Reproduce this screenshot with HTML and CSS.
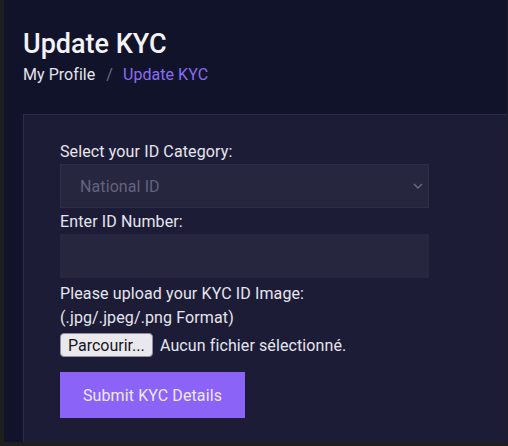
FILE: index.html
```html
<!DOCTYPE html>
<html lang="en">
<head>
<meta charset="utf-8">
<title>Update KYC</title>
<link rel="stylesheet" href="styles.css">
</head>
<body>
<div class="frame">
  <main class="page">
    <h1 class="title">Update KYC</h1>
    <nav class="crumbs">
      <span class="crumb">My Profile</span>
      <span class="sep">/</span>
      <span class="crumb current">Update KYC</span>
    </nav>
    <section class="card">
      <form class="form">
        <label class="label">Select your ID Category:</label>
        <div class="select-wrap">
          <div class="select">National ID</div>
          <svg class="chev" width="10" height="6" viewBox="0 0 10 6"><path d="M1 1l4 4 4-4" fill="none" stroke="#6a6985" stroke-width="1.4"/></svg>
        </div>
        <label class="label after-select">Enter ID Number:</label>
        <div class="input"></div>
        <p class="label after-input">Please upload your KYC ID Image:<br>(.jpg/.jpeg/.png Format)</p>
        <div class="file">
          <span class="file-btn">Parcourir...</span>
          <span class="file-name">Aucun fichier sélectionné.</span>
        </div>
        <button type="button" class="submit">Submit KYC Details</button>
      </form>
    </section>
  </main>
</div>
</body>
</html>
```

FILE: styles.css
```css
* { box-sizing: border-box; }
html, body { margin: 0; padding: 0; }
body {
  background: #1e1e1f;
  width: 508px;
  height: 446px;
  overflow: hidden;
  font-family: Roboto, "Liberation Sans", sans-serif;
}
.frame {
  display: flex;
  height: 446px;
  padding: 0 1px 4px 4px;
}
.page {
  flex: 1;
  display: flex;
  flex-direction: column;
  background: #11132a;
  padding: 27px 0 0 19px;
}
.title {
  margin: 0 0 2px 0;
  font-size: 27px;
  line-height: 34px;
  font-weight: 500;
  color: #f3f3f7;
}
.crumbs {
  display: flex;
  font-size: 16px;
  line-height: 24px;
  letter-spacing: 0.05px;
  color: #e4e4ec;
  margin-bottom: 27px;
}
.sep {
  color: #6c6c80;
  margin: 0 10px 0 11px;
}
.current { color: #8b6cf3; }
.card {
  flex: 1;
  background: #1d1c37;
  border-top: 1px solid #2c2b49;
  border-left: 1px solid #2c2b49;
  padding: 25px 0 0 36px;
}
.form {
  display: flex;
  flex-direction: column;
  align-items: flex-start;
}
.label {
  margin: 0;
  font-size: 16px;
  line-height: 24px;
  letter-spacing: 0.12px;
  color: #e6e6ee;
}
.after-select { margin-top: 2px; }
.after-input { margin-top: 4px; }
.select-wrap {
  position: relative;
  width: 369px;
}
.select, .input {
  width: 369px;
  height: 44px;
  background: #27263f;
  border: 1px solid #2e2d4a;
}
.select {
  display: flex;
  align-items: center;
  padding-left: 19px;
  font-size: 16px;
  letter-spacing: 0.1px;
  color: #64637e;
}
.chev {
  position: absolute;
  right: 6px;
  top: 19px;
}
.input { border-color: #27263f; }
.file {
  display: flex;
  align-items: center;
  gap: 7px;
  margin-top: 3px;
  font-size: 16px;
  letter-spacing: 0.1px;
  color: #e6e6ee;
}
.file-btn {
  display: flex;
  align-items: center;
  height: 24px;
  width: 93px;
  padding: 0 6px 0 7px;
  background: #e9e9ed;
  border: 1px solid #8f8f9d;
  border-radius: 4px;
  color: #15141a;
  font-size: 16px;
  letter-spacing: 0;
}
.submit {
  margin-top: 15px;
  width: 185px;
  height: 46px;
  border: 0;
  padding: 0;
  background: #8b63f6;
  color: #eee8ff;
  font-family: Roboto, "Liberation Sans", sans-serif;
  font-size: 16px;
  letter-spacing: 0.1px;
}
```
